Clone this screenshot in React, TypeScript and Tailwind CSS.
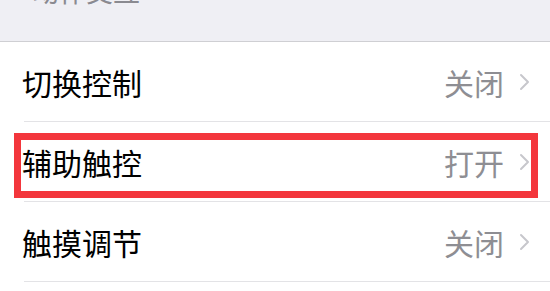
type Row = { label: string; value: string };

const rows: Row[] = [
  { label: "切换控制", value: "关闭" },
  { label: "辅助触控", value: "打开" },
  { label: "触摸调节", value: "关闭" },
];

const font = "font-['PingFang_SC','Noto_Sans_CJK_SC',sans-serif]";

function Chevron() {
  return (
    <svg width="11" height="18" viewBox="0 0 11 18" className="ml-[15px] shrink-0">
      <polyline points="2,2 9,9 2,16" fill="none" stroke="#c7c7cc" strokeWidth="2" strokeLinecap="round" strokeLinejoin="round" />
    </svg>
  );
}

function SettingsRow({ row }: { row: Row }) {
  return (
    <div className="pl-6">
      <div className="flex h-[80px] items-center border-b border-[#e3e3e6] pr-5">
        <span className="-ml-[2px] text-[30px] leading-none text-black">{row.label}</span>
        <span className="ml-auto text-[30px] leading-none text-[#8e8e93]">{row.value}</span>
        <Chevron />
      </div>
    </div>
  );
}

export default function App() {
  return (
    <div className={`relative h-[291px] w-full overflow-hidden bg-white ${font}`}>
      <div className="h-[42px] overflow-hidden border-b border-[#cfcfd3] bg-[#efeff4] pl-[32px]">
        <div className="-mt-[23px] text-[27px] leading-none text-[#8a8a90]">动作交互</div>
      </div>
      {rows.map((row) => (
        <SettingsRow key={row.label} row={row} />
      ))}
      {/* highlight around the active row */}
      <div className="pointer-events-none absolute left-[14px] top-[133px] h-[65px] w-[524px] border-[7px] border-[#f3363c]" />
    </div>
  );
}
